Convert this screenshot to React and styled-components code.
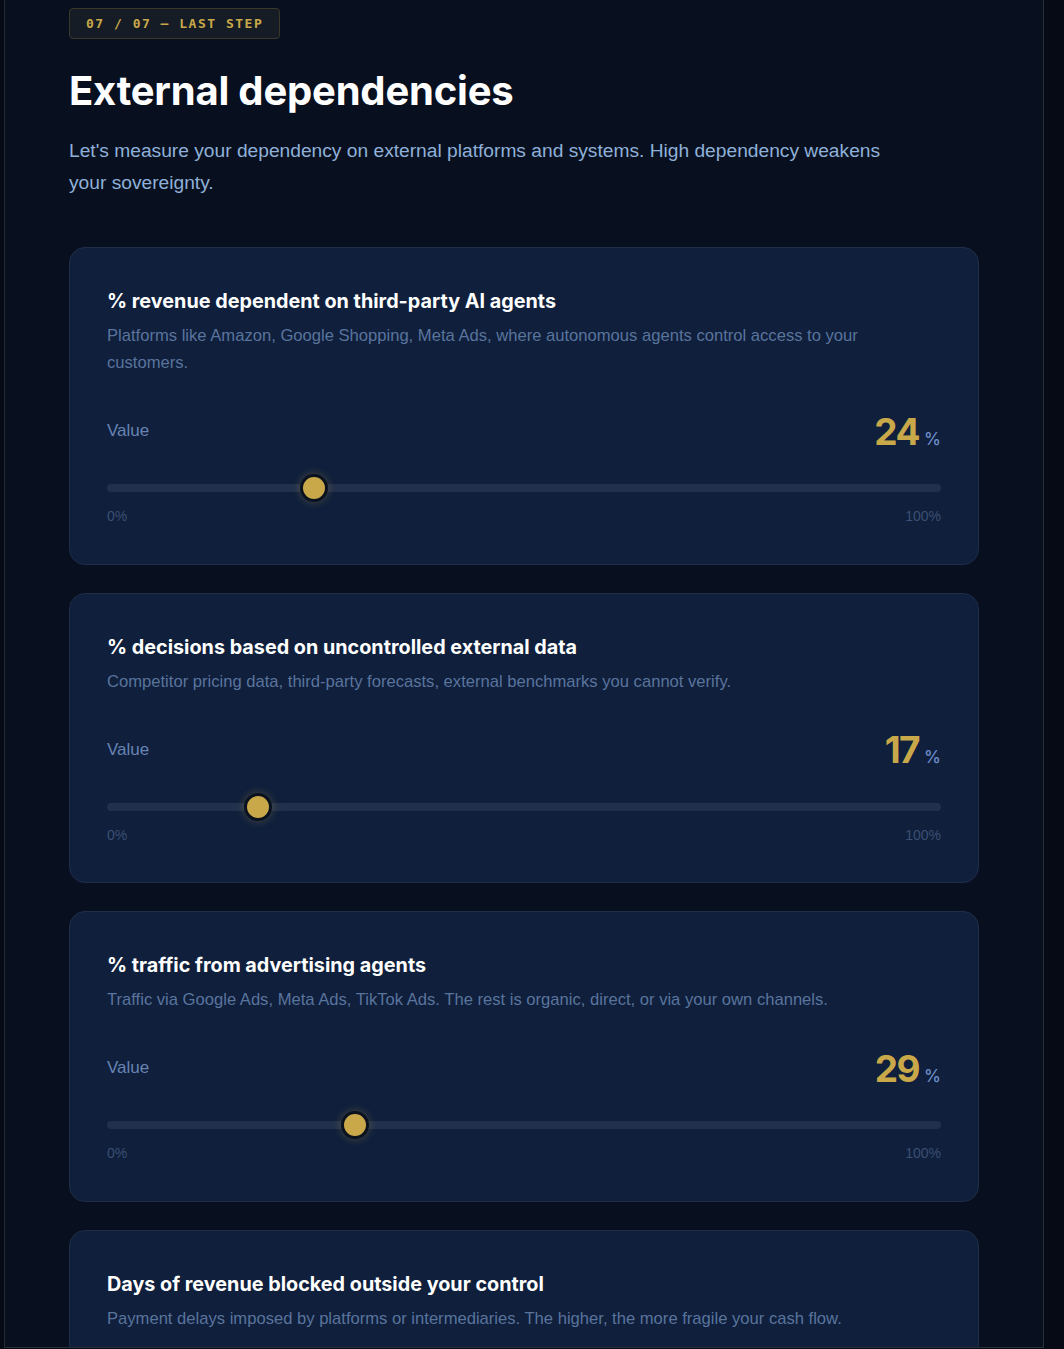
import React, { useState } from "react";
import styled, { createGlobalStyle } from "styled-components";

const Global = createGlobalStyle`
  html, body { margin: 0; padding: 0; background: #050a14; }
  body { font-family: "Liberation Sans", Arial, sans-serif; overflow: hidden; }
  * { box-sizing: border-box; }
`;

const Frame = styled.div`
  margin-left: 4px;
  width: 1040px;
  height: 1348px;
  overflow: hidden;
  background: #08101f;
  border-left: 1px solid #252b35;
  border-right: 1px solid #2a303a;
  border-bottom: 1px solid #2a303a;
`;

const Content = styled.main`
  padding: 8px 64px 0 64px;
  display: flex;
  flex-direction: column;
`;

const Badge = styled.div`
  align-self: flex-start;
  height: 31px;
  display: flex;
  align-items: center;
  padding: 0 16px;
  border: 1px solid #3a3828;
  border-radius: 4px;
  background: #161c25;
  color: #c9a84a;
  font-family: "DejaVu Sans Mono", "Liberation Mono", monospace;
  font-weight: 700;
  font-size: 13px;
  letter-spacing: 1.5px;
`;

const Heading = styled.h1`
  margin: 28px 0 0 0;
  font-family: Inter, "Noto Sans", sans-serif;
  font-weight: 700;
  font-size: 40px;
  line-height: 48px;
  letter-spacing: -0.2px;
  color: #ffffff;
`;

const Lead = styled.p`
  margin: 20px 0 0 0;
  max-width: 840px;
  font-size: 19.2px;
  line-height: 32px;
  color: #8fb0d9;
`;

const Cards = styled.div`
  margin-top: 48px;
  display: flex;
  flex-direction: column;
  gap: 28px;
`;

const Card = styled.section`
  width: 910px;
  background: #0f1f3c;
  border: 1px solid #1f2d47;
  border-radius: 16px;
  padding: 40px 37px 38.5px 37px;
  display: flex;
  flex-direction: column;
`;

const Title = styled.h2`
  margin: 0;
  font-family: Inter, "Noto Sans", sans-serif;
  font-weight: 700;
  font-size: 19.8px;
  line-height: 26px;
  color: #ffffff;
`;

const Desc = styled.p`
  margin: 8px 0 0 0;
  max-width: 790px;
  font-size: 16.6px;
  line-height: 27px;
  color: #5a749c;
`;

const ValueRow = styled.div`
  margin-top: 33px;
  height: 44px;
  display: flex;
  align-items: center;
  justify-content: space-between;
`;

const ValueLabel = styled.span`
  font-size: 17px;
  color: #6884b2;
`;

const Number = styled.span`
  font-family: Inter, "Noto Sans", sans-serif;
  font-weight: 700;
  font-size: 37px;
  letter-spacing: -1.5px;
  color: #c9a84a;
  display: flex;
  align-items: baseline;
  gap: 5px;
`;

const Unit = styled.span`
  font-size: 17px;
  letter-spacing: 0;
  font-weight: 500;
  color: #6d8dc8;
`;

const Range = styled.input.attrs({ type: "range" })`
  -webkit-appearance: none;
  appearance: none;
  margin: 21px 0 0 0;
  width: 100%;
  height: 28px;
  background: transparent;
  outline: none;

  &::-webkit-slider-runnable-track {
    height: 8px;
    border-radius: 4px;
    background: #21304c;
  }
  &::-webkit-slider-thumb {
    -webkit-appearance: none;
    appearance: none;
    box-sizing: border-box;
    width: 28px;
    height: 28px;
    margin-top: -10px;
    border-radius: 50%;
    background: #c9a84a;
    border: 3px solid #0a1220;
    box-shadow: 0 0 10px rgba(201, 168, 74, 0.3);
  }
`;

const Scale = styled.div`
  margin-top: 5px;
  display: flex;
  justify-content: space-between;
  font-size: 14px;
  line-height: 18px;
  color: #3c4f72;
`;

const items = [
  {
    title: "% revenue dependent on third-party AI agents",
    desc: "Platforms like Amazon, Google Shopping, Meta Ads, where autonomous agents control access to your customers.",
    value: 24,
  },
  {
    title: "% decisions based on uncontrolled external data",
    desc: "Competitor pricing data, third-party forecasts, external benchmarks you cannot verify.",
    value: 17,
  },
  {
    title: "% traffic from advertising agents",
    desc: "Traffic via Google Ads, Meta Ads, TikTok Ads. The rest is organic, direct, or via your own channels.",
    value: 29,
  },
  {
    title: "Days of revenue blocked outside your control",
    desc: "Payment delays imposed by platforms or intermediaries. The higher, the more fragile your cash flow.",
    value: 30,
    unit: "days",
    max: 90,
    maxLabel: "90 days",
    minLabel: "0 days",
  },
];

function SliderCard({ item }) {
  const [v, setV] = useState(item.value);
  return (
    <Card>
      <Title>{item.title}</Title>
      <Desc>{item.desc}</Desc>
      <ValueRow>
        <ValueLabel>Value</ValueLabel>
        <Number>
          {v}
          <Unit>{item.unit || "%"}</Unit>
        </Number>
      </ValueRow>
      <Range
        min={0}
        max={item.max || 100}
        value={v}
        onChange={(e) => setV(+e.target.value)}
      />
      <Scale>
        <span>{item.minLabel || "0%"}</span>
        <span>{item.maxLabel || "100%"}</span>
      </Scale>
    </Card>
  );
}

export default function App() {
  return (
    <>
      <Global />
      <Frame>
        <Content>
          <Badge>07 / 07 — LAST STEP</Badge>
          <Heading>External dependencies</Heading>
          <Lead>
            Let's measure your dependency on external platforms and systems. High
            dependency weakens your sovereignty.
          </Lead>
          <Cards>
            {items.map((it) => (
              <SliderCard key={it.title} item={it} />
            ))}
          </Cards>
        </Content>
      </Frame>
    </>
  );
}
